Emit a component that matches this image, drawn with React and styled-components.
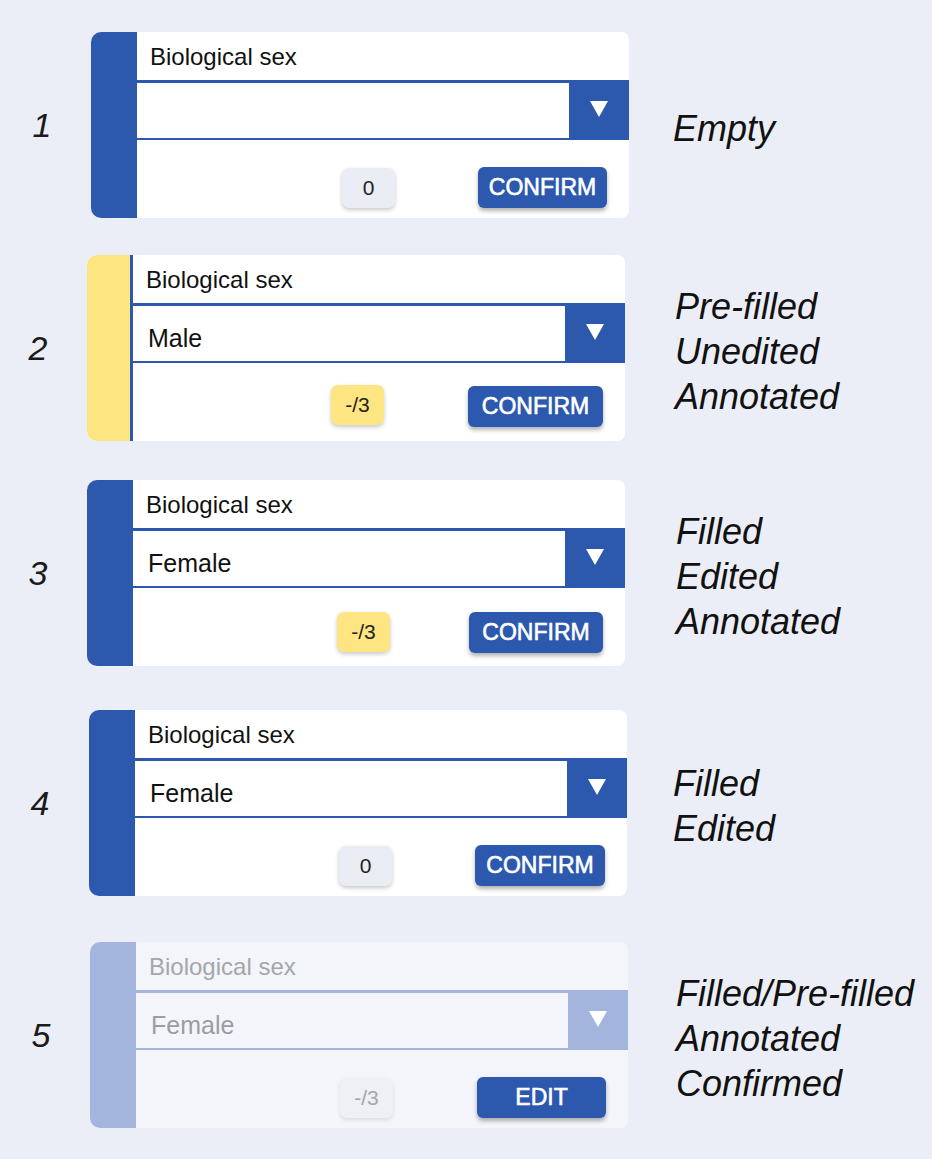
import React from "react";
import styled, { createGlobalStyle, css } from "styled-components";

const blue = "#2c58ad";
const paleBlue = "#a3b5dc";
const yellow = "#fde681";

const GlobalStyle = createGlobalStyle`
  html, body {
    margin: 0;
    padding: 0;
    background: #ebeef6;
  }
  body {
    font-family: "Liberation Sans", Arial, sans-serif;
    color: #111;
  }
`;

const Page = styled.div`
  width: 932px;
  height: 1159px;
  padding-top: 32px;
  box-sizing: border-box;
  background: #ebeef6;
  overflow: hidden;
`;

const Row = styled.div`
  display: flex;
  align-items: center;
  margin-top: ${p => p.gap}px;
  padding-left: ${p => p.shift}px;
`;

const Number = styled.div`
  width: 82px;
  padding-right: 16px;
  box-sizing: border-box;
  text-align: center;
  font-style: italic;
  font-size: 34px;
  color: #1a1a1a;
`;

const Card = styled.div`
  display: flex;
  width: 538px;
  height: 186px;
  border-radius: 10px 8px 8px 10px;
  overflow: hidden;
  background: ${p => (p.disabled ? "#f3f5fa" : "#fff")};
`;

const Side = styled.div`
  width: 46px;
  flex-shrink: 0;
  box-sizing: border-box;
  background: ${p => p.color};
  ${p =>
    p.edge &&
    css`
      border-right: 3px solid ${blue};
    `}
`;

const Body = styled.div`
  flex: 1;
  display: flex;
  flex-direction: column;
`;

const Label = styled.div`
  height: 48px;
  display: flex;
  align-items: center;
  padding-left: 13px;
  padding-top: 2px;
  box-sizing: border-box;
  font-size: 24px;
  color: ${p => (p.disabled ? "#a4a6ab" : "#111")};
`;

const Select = styled.div`
  height: 60px;
  display: flex;
  box-sizing: border-box;
  border-top: 3px solid ${p => p.line};
  border-bottom: 2px solid ${p => p.line};
  background: ${p => p.line};
`;

const Input = styled.div`
  flex: 1;
  display: flex;
  align-items: center;
  padding-left: 15px;
  padding-top: 10px;
  box-sizing: border-box;
  font-size: 25px;
  background: ${p => (p.disabled ? "#f3f5fa" : "#fff")};
  color: ${p => (p.disabled ? "#9b9da2" : "#111")};
`;

const Arrow = styled.div`
  width: 60px;
  display: flex;
  align-items: center;
  justify-content: center;
  padding-bottom: 3px;
  box-sizing: border-box;
`;

const Footer = styled.div`
  flex: 1;
  display: flex;
  align-items: flex-end;
  justify-content: flex-end;
  padding: 0 22px ${p => p.bottom}px 0;
`;

const Badge = styled.div`
  width: 53px;
  height: 40px;
  border-radius: 7px;
  display: flex;
  align-items: center;
  justify-content: center;
  font-size: 21px;
  margin-right: ${p => p.gap}px;
  margin-bottom: ${p => p.lift}px;
  background: ${p => (p.yellow ? yellow : p.disabled ? "#eef0f5" : "#eaedf3")};
  color: ${p => (p.disabled ? "#a4a6ab" : "#222")};
  box-shadow: 0 2px 4px rgba(0, 0, 0, ${p => (p.disabled ? 0.1 : 0.22)});
`;

const Button = styled.div`
  width: ${p => p.width}px;
  height: 41px;
  border-radius: 6px;
  background: ${blue};
  color: #fff;
  font-size: 23px;
  -webkit-text-stroke: 0.6px #fff;
  display: flex;
  align-items: center;
  justify-content: center;
  box-shadow: 0 3px 4px rgba(0, 0, 0, 0.3);
`;

const Notes = styled.div`
  margin-left: ${p => p.offset}px;
  padding-top: 6px;
  font-style: italic;
  font-size: 36px;
  line-height: 45px;
  color: #111;
`;

const Triangle = () => (
  <svg width="18" height="16" viewBox="0 0 18 16">
    <polygon points="0,0 18,0 9,16" fill="#fff" />
  </svg>
);

const rows = [
  { n: 1, gap: 0, shift: 0, side: blue, value: "", badge: "0", badgeGap: 83, lift: 0, bottom: 10, btn: "CONFIRM", btnW: 129, notes: ["Empty"], notesOffset: 44 },
  { n: 2, gap: 37, shift: -4, side: yellow, edge: true, value: "Male", badge: "-/3", yellow: true, badgeGap: 84, lift: 2, bottom: 14, btn: "CONFIRM", btnW: 135, notes: ["Pre-filled", "Unedited", "Annotated"], notesOffset: 50 },
  { n: 3, gap: 39, shift: -4, side: blue, value: "Female", badge: "-/3", yellow: true, badgeGap: 79, lift: 1, bottom: 13, btn: "CONFIRM", btnW: 134, notes: ["Filled", "Edited", "Annotated"], notesOffset: 51 },
  { n: 4, gap: 44, shift: -2, side: blue, value: "Female", badge: "0", badgeGap: 83, lift: 0, bottom: 10, btn: "CONFIRM", btnW: 130, notes: ["Filled", "Edited"], notesOffset: 46 },
  { n: 5, gap: 46, shift: -1, side: paleBlue, value: "Female", badge: "-/3", disabled: true, badgeGap: 84, lift: 0, bottom: 10, btn: "EDIT", btnW: 129, notes: ["Filled/Pre-filled", "Annotated", "Confirmed"], notesOffset: 48 }
];

const App = () => (
  <Page>
    <GlobalStyle />
    {rows.map(r => (
      <Row key={r.n} gap={r.gap} shift={r.shift + 9}>
        <Number>{r.n}</Number>
        <Card disabled={r.disabled}>
          <Side color={r.side} edge={r.edge} />
          <Body>
            <Label disabled={r.disabled}>Biological sex</Label>
            <Select line={r.disabled ? paleBlue : blue}>
              <Input disabled={r.disabled}>{r.value}</Input>
              <Arrow>
                <Triangle />
              </Arrow>
            </Select>
            <Footer bottom={r.bottom}>
              <Badge yellow={r.yellow} disabled={r.disabled} gap={r.badgeGap} lift={r.lift}>
                {r.badge}
              </Badge>
              <Button width={r.btnW}>{r.btn}</Button>
            </Footer>
          </Body>
        </Card>
        <Notes offset={r.notesOffset}>
          {r.notes.map(t => (
            <div key={t}>{t}</div>
          ))}
        </Notes>
      </Row>
    ))}
  </Page>
);

export default App;
